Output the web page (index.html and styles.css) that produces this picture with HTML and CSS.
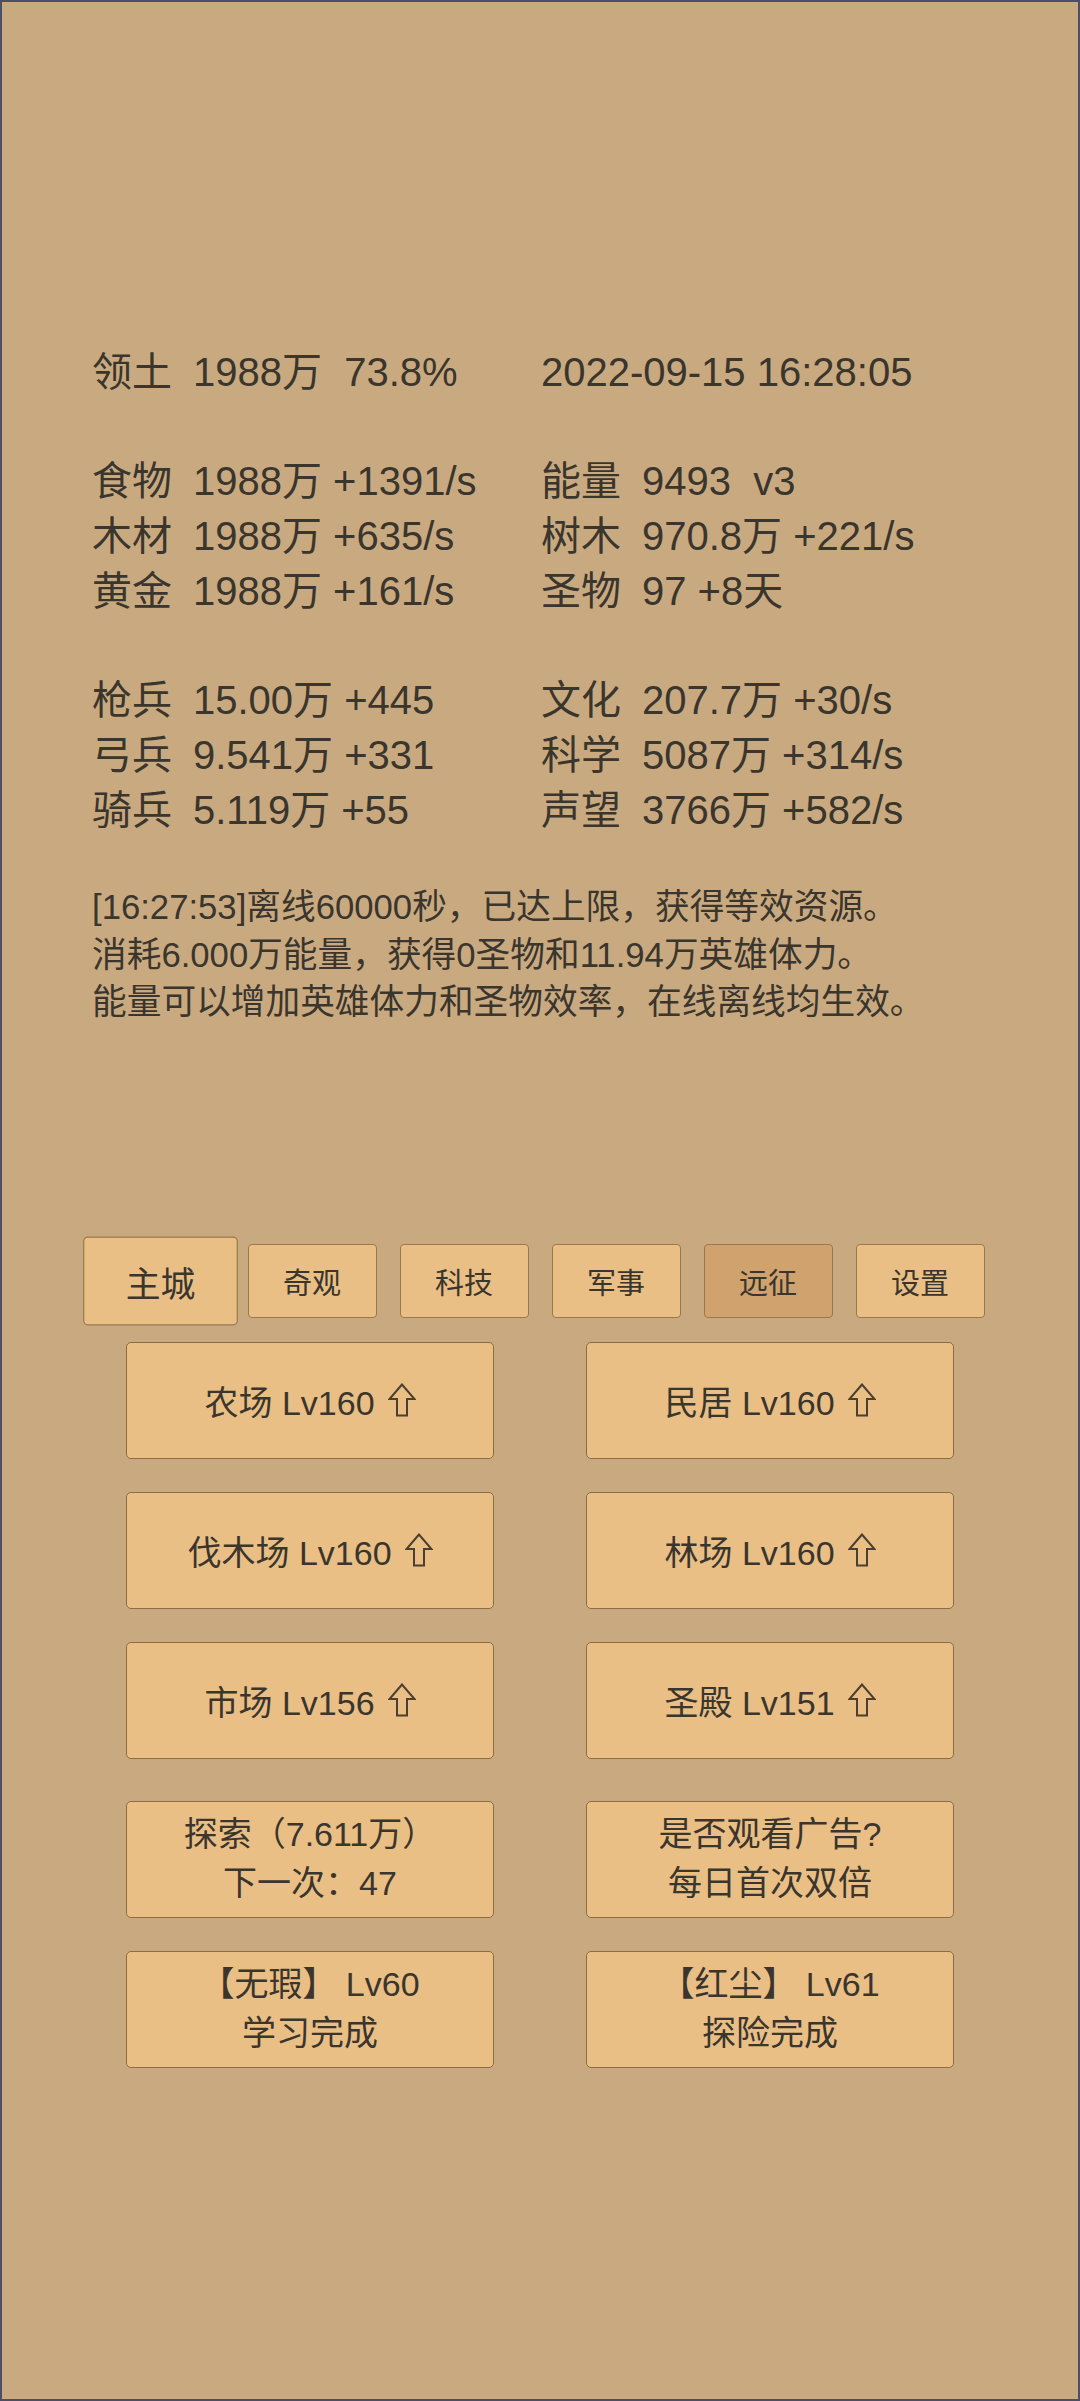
FILE: index.html
```html
<!doctype html>
<html lang="zh">
<head>
	<meta charset="UTF-8" />
	<meta name="viewport" content="width=device-width,user-scalable=no">
	<title>领土</title>
<link rel="stylesheet" href="styles.css">
</head>
<body>
	<section class="screen">
		<!-- 资源 -->
		<div class="stats">
			<div class="cell"><span class="k">领土</span><span class="v">1988万  73.8%</span></div>
			<div class="cell"><span class="v">2022-09-15 16:28:05</span></div>
			<div class="cell"></div><div class="cell"></div>
			<div class="cell"><span class="k">食物</span><span class="v">1988万 +1391/s</span></div>
			<div class="cell"><span class="k">能量</span><span class="v">9493  v3</span></div>
			<div class="cell"><span class="k">木材</span><span class="v">1988万 +635/s</span></div>
			<div class="cell"><span class="k">树木</span><span class="v">970.8万 +221/s</span></div>
			<div class="cell"><span class="k">黄金</span><span class="v">1988万 +161/s</span></div>
			<div class="cell"><span class="k">圣物</span><span class="v">97 +8天</span></div>
			<div class="cell"></div><div class="cell"></div>
			<div class="cell"><span class="k">枪兵</span><span class="v">15.00万 +445</span></div>
			<div class="cell"><span class="k">文化</span><span class="v">207.7万 +30/s</span></div>
			<div class="cell"><span class="k">弓兵</span><span class="v">9.541万 +331</span></div>
			<div class="cell"><span class="k">科学</span><span class="v">5087万 +314/s</span></div>
			<div class="cell"><span class="k">骑兵</span><span class="v">5.119万 +55</span></div>
			<div class="cell"><span class="k">声望</span><span class="v">3766万 +582/s</span></div>
		</div>

		<!-- 日志 -->
		<div class="log">
			<p>[16:27:53]离线60000秒，已达上限，获得等效资源。</p>
			<p>消耗6.000万能量，获得0圣物和11.94万英雄体力。</p>
			<p>能量可以增加英雄体力和圣物效率，在线离线均生效。</p>
		</div>

		<nav class="tabs">
			<a href="javascript:;" class="tab main">主城</a>
			<a href="javascript:;" class="tab">奇观</a>
			<a href="javascript:;" class="tab">科技</a>
			<a href="javascript:;" class="tab">军事</a>
			<a href="javascript:;" class="tab active">远征</a>
			<a href="javascript:;" class="tab">设置</a>
		</nav>

		<div class="builds">
			<a href="javascript:;" class="btn">农场 Lv160<svg class="up" viewBox="0 0 28 34"><path d="M14 1.5 L1.5 16 H9 V32.5 H19 V16 H26.5 Z"/></svg></a>
			<a href="javascript:;" class="btn">民居 Lv160<svg class="up" viewBox="0 0 28 34"><path d="M14 1.5 L1.5 16 H9 V32.5 H19 V16 H26.5 Z"/></svg></a>
			<a href="javascript:;" class="btn">伐木场 Lv160<svg class="up" viewBox="0 0 28 34"><path d="M14 1.5 L1.5 16 H9 V32.5 H19 V16 H26.5 Z"/></svg></a>
			<a href="javascript:;" class="btn">林场 Lv160<svg class="up" viewBox="0 0 28 34"><path d="M14 1.5 L1.5 16 H9 V32.5 H19 V16 H26.5 Z"/></svg></a>
			<a href="javascript:;" class="btn">市场 Lv156<svg class="up" viewBox="0 0 28 34"><path d="M14 1.5 L1.5 16 H9 V32.5 H19 V16 H26.5 Z"/></svg></a>
			<a href="javascript:;" class="btn">圣殿 Lv151<svg class="up" viewBox="0 0 28 34"><path d="M14 1.5 L1.5 16 H9 V32.5 H19 V16 H26.5 Z"/></svg></a>
		</div>

		<div class="builds extra">
			<a href="javascript:;" class="btn two">探索（7.611万）<br>下一次：47</a>
			<a href="javascript:;" class="btn two">是否观看广告?<br>每日首次双倍</a>
			<a href="javascript:;" class="btn two">【无瑕】 Lv60<br>学习完成</a>
			<a href="javascript:;" class="btn two">【红尘】 Lv61<br>探险完成</a>
		</div>
	</section>
</body>
</html>
```

FILE: styles.css
```css
body{
	margin: 0;
	background: #c9aa80;
}
.screen{
	box-sizing: border-box;
	width: 1080px;
	height: 2401px;
	border: 2px solid #4a4e68;
	background: #c9aa80;
	color: #3a352d;
	font-family: "Liberation Sans", "Noto Sans CJK SC", sans-serif;
	padding-top: 343px;
}
.stats{
	display: grid;
	grid-template-columns: 449px 1fr;
	grid-auto-rows: 54.7px;
	padding-left: 90px;
	font-size: 40px;
	line-height: 54.7px;
	white-space: pre;
}
.stats .k{
	display: inline-block;
	width: 101px;
}
.log{
	margin-top: 47px;
	padding-left: 90px;
	font-size: 34.7px;
	line-height: 47.5px;
}
.log p{
	margin: 0;
}
.tabs{
	display: flex;
	justify-content: center;
	align-items: center;
	gap: 23px;
	margin-top: 217px;
	height: 74px;
}
.tab{
	box-sizing: border-box;
	width: 129px;
	height: 74px;
	display: flex;
	align-items: center;
	justify-content: center;
	background: #e9bf85;
	border: 1.5px solid #9a784c;
	border-radius: 4px;
	color: #3a352d;
	text-decoration: none;
	font-family: "Noto Sans CJK SC", sans-serif;
	font-size: 29px;
	font-weight: 400;
}
.tab.main{
	transform: scale(1.2);
}
.tab.active{
	background: #cfa26e;
}
.builds{
	display: grid;
	grid-template-columns: 368px 368px;
	grid-auto-rows: 117px;
	column-gap: 92px;
	row-gap: 33px;
	justify-content: center;
	margin-top: 24px;
}
.builds.extra{
	margin-top: 42px;
}
.btn{
	box-sizing: border-box;
	display: flex;
	align-items: center;
	justify-content: center;
	background: #e9bf85;
	border: 1.5px solid #8e6c43;
	border-radius: 5px;
	color: #3a352d;
	text-decoration: none;
	font-size: 34px;
}
.btn.two{
	text-align: center;
	line-height: 49px;
}
.up{
	width: 28px;
	height: 34px;
	margin-left: 13px;
	fill: none;
	stroke: #4a3f30;
	stroke-width: 2;
	stroke-linejoin: miter;
}
```
